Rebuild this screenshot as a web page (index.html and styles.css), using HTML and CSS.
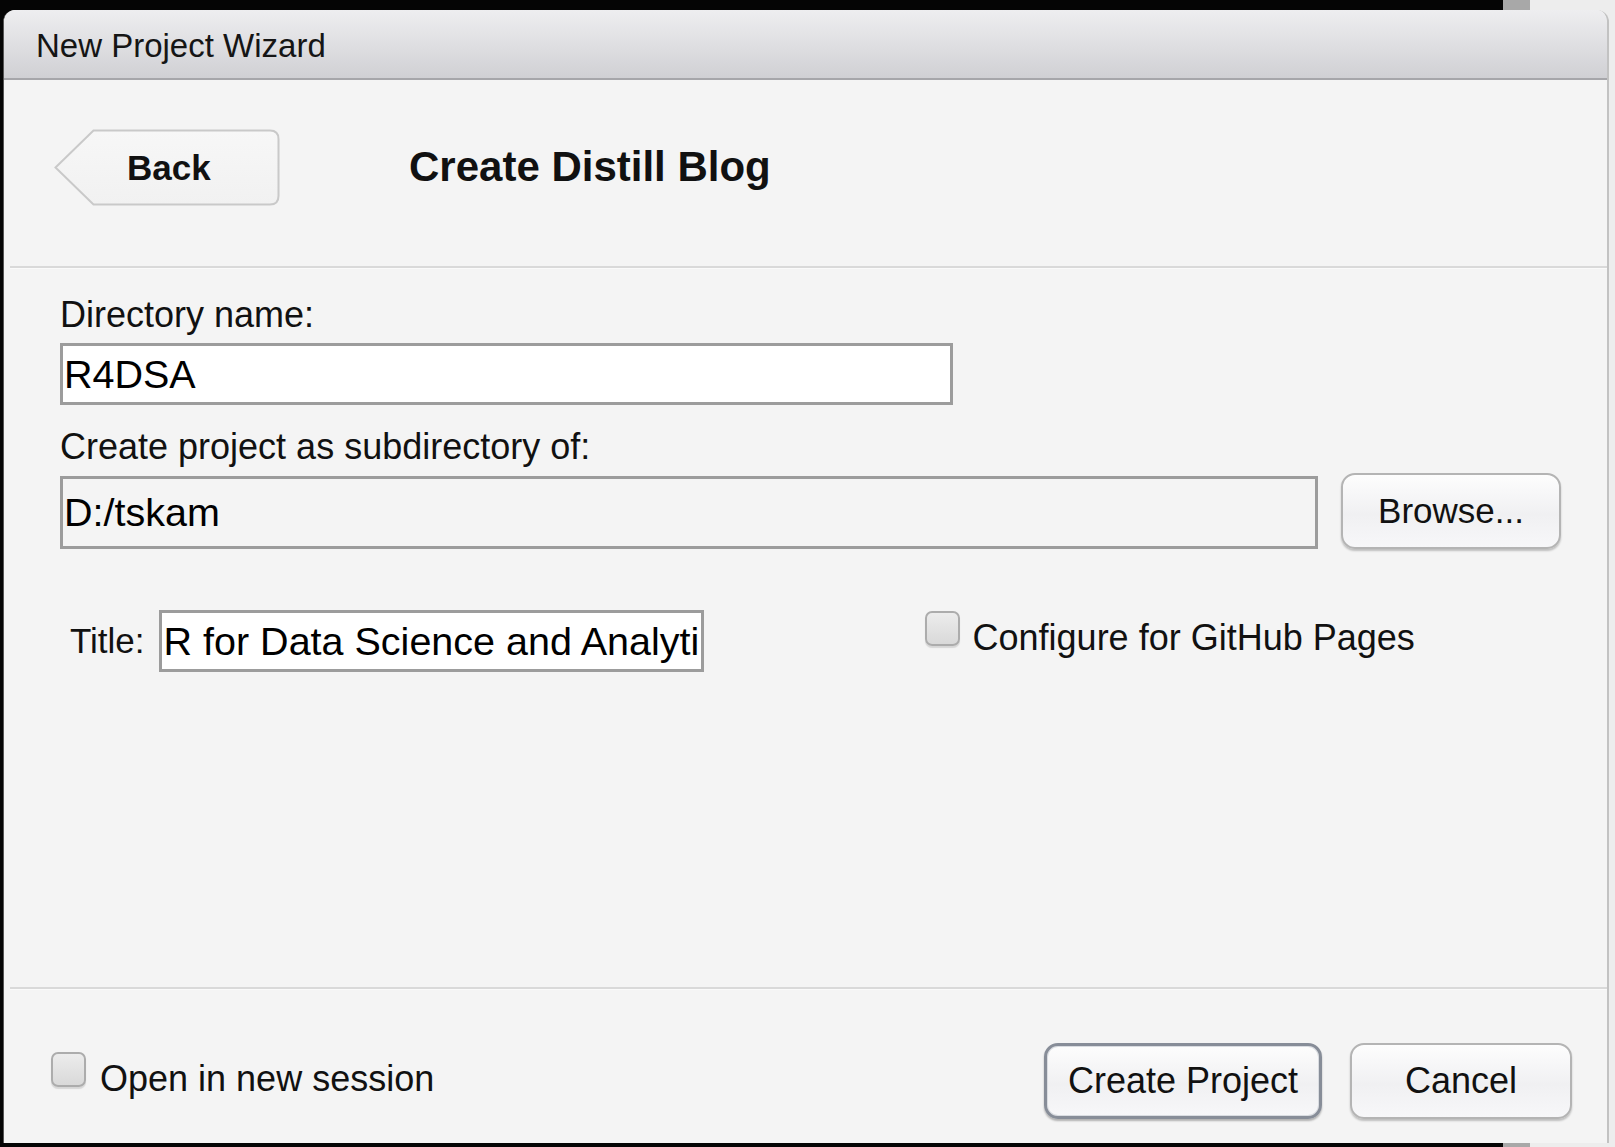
FILE: index.html
```html
<!DOCTYPE html>
<html lang="en">
<head>
<meta charset="utf-8">
<title>New Project Wizard</title>
<link rel="stylesheet" href="styles.css">
</head>
<body>
  <div class="dialog">
    <div class="titlebar">New Project Wizard</div>
    <div class="header">
      <button class="back">
        <svg class="back-shape" width="226" height="77" viewBox="0 0 226 77">
          <defs>
            <linearGradient id="bg" x1="0" y1="0" x2="0" y2="1">
              <stop offset="0" stop-color="#f7f7f7"/>
              <stop offset="1" stop-color="#f1f1f1"/>
            </linearGradient>
          </defs>
          <path d="M1.5 38.5 L39.5 1.5 H216 Q224.5 1.5 224.5 10 V67 Q224.5 75.5 216 75.5 H39.5 Z" fill="url(#bg)" stroke="#c9c9c9" stroke-width="2"/>
        </svg>
        <span class="back-label">Back</span>
      </button>
      <h1 class="heading">Create Distill Blog</h1>
    </div>
    <div class="sep"></div>
    <div class="content">
      <div class="label first">Directory name:</div>
      <input class="field name" type="text" value="R4DSA">
      <div class="label second">Create project as subdirectory of:</div>
      <div class="dir-row">
        <input class="field dir" type="text" value="D:/tskam" readonly>
        <button class="btn browse">Browse...</button>
      </div>
      <div class="title-row">
        <span class="title-label">Title:</span>
        <input class="field title" type="text" value="R for Data Science and Analytics">
        <label class="check gh">
          <input class="box" type="checkbox">
          <span class="check-text">Configure for GitHub Pages</span>
        </label>
      </div>
    </div>
    <div class="sep"></div>
    <div class="footer">
      <label class="check session">
        <input class="box" type="checkbox">
        <span class="check-text">Open in new session</span>
      </label>
      <div class="actions">
        <button class="btn primary">Create Project</button>
        <button class="btn cancel">Cancel</button>
      </div>
    </div>
  </div>
</body>
</html>
```
FILE: styles.css
```css
* { box-sizing: border-box; }

html, body { margin: 0; }

body {
  width: 1615px;
  height: 1147px;
  overflow: hidden;
  padding: 10px 6px 4px 3px;
  background: linear-gradient(to right, #050505 0, #050505 1503px, #a8a8a8 1503px, #a8a8a8 1530px, #ededed 1530px);
  font-family: "Liberation Sans", Arial, sans-serif;
  color: #111;
}

.dialog {
  width: 1606px;
  height: 1133px;
  display: flex;
  flex-direction: column;
  background: #f4f4f4;
  border-radius: 12px 12px 0 0;
  border-left: 1px solid #555;
  border-right: 2px solid #c2c2c2;
  overflow: hidden;
}

.titlebar {
  flex: none;
  height: 70px;
  display: flex;
  align-items: center;
  padding: 4px 0 0 32px;
  font-size: 33px;
  color: #151515;
  background: linear-gradient(#eeeef0, #d0d0d4);
  border-bottom: 2px solid #a6a6aa;
}

.header {
  flex: none;
  height: 186px;
  display: flex;
  align-items: flex-start;
  padding: 49px 0 0 50px;
}

.back {
  position: relative;
  width: 226px;
  height: 77px;
  padding: 0 0 0 73px;
  margin: 0;
  border: none;
  background: none;
  display: flex;
  align-items: center;
  font-family: inherit;
  font-weight: bold;
  font-size: 35px;
  line-height: 77px;
  color: #111;
}

.back-shape {
  position: absolute;
  left: 0;
  top: 0;
}

.back-label { position: relative; }

.heading {
  margin: -1px 0 0 129px;
  font-size: 42px;
  font-weight: bold;
  line-height: 77px;
  color: #111;
}

.sep {
  flex: none;
  height: 2px;
  margin: 0 0 0 6px;
  background: #d9d9d9;
  box-shadow: 0 1px 0 #fafafa;
}

.content {
  flex: 1;
  display: flex;
  flex-direction: column;
  align-items: flex-start;
  padding: 0 46px 0 56px;
}

.label {
  font-size: 36px;
  line-height: 42px;
}

.label.first { margin-top: 26px; }
.label.second { margin-top: 21px; }

.field {
  margin: 0;
  border: 3px solid #9c9c9c;
  padding: 0 1px;
  font-family: "Liberation Sans", Arial, sans-serif;
  font-size: 39.5px;
  color: #000;
  background: #fff;
  outline: none;
}

.field.name {
  margin-top: 7px;
  width: 893px;
  height: 62px;
}

.dir-row {
  margin-top: 5px;
  width: 100%;
  display: flex;
  align-items: flex-end;
  gap: 23px;
}

.field.dir {
  flex: 1;
  height: 73px;
  background: #f4f4f4;
}

.btn {
  margin: 0;
  height: 76px;
  padding: 0;
  border: 2px solid #b4b4b4;
  border-radius: 14px;
  background: linear-gradient(#fdfdfd, #f0f0f2 55%, #f7f7f9);
  box-shadow: 0 2px 2px rgba(0, 0, 0, 0.22);
  font-family: "Liberation Sans", Arial, sans-serif;
  font-size: 36px;
  color: #111;
}

.btn.browse {
  width: 220px;
  font-size: 35px;
}

.title-row {
  margin-top: 61px;
  width: 100%;
  display: flex;
  align-items: flex-start;
}

.title-label {
  padding-left: 10px;
  font-size: 35px;
  line-height: 62px;
}

.field.title {
  margin-left: 14px;
  width: 545px;
  height: 62px;
  padding: 0 2px;
}

.check {
  display: flex;
  align-items: flex-start;
}

.check.gh { margin-left: 221px; }

.box {
  appearance: none;
  -webkit-appearance: none;
  margin: 1px 0 0 0;
  width: 35px;
  height: 35px;
  border: 2px solid #acacac;
  border-radius: 7px;
  background: linear-gradient(#ececec, #d9d9d9);
  box-shadow: 0 2px 1px rgba(0, 0, 0, 0.12);
}

.check-text {
  margin-left: 13px;
  margin-top: 2px;
  font-size: 36px;
  line-height: 52px;
}

.footer {
  flex: none;
  height: 154px;
  display: flex;
  align-items: flex-start;
  padding: 54px 35px 0 47px;
}

.check.session { margin-top: 8px; }
.check.session .check-text { margin-left: 14px; }

.actions {
  margin-left: auto;
  display: flex;
  gap: 28px;
}

.btn.primary {
  width: 278px;
  border: 3px solid #878d98;
  box-shadow: inset 0 0 0 1px #d9dce1, 0 2px 2px rgba(0, 0, 0, 0.28);
}

.btn.cancel {
  width: 222px;
}
```
